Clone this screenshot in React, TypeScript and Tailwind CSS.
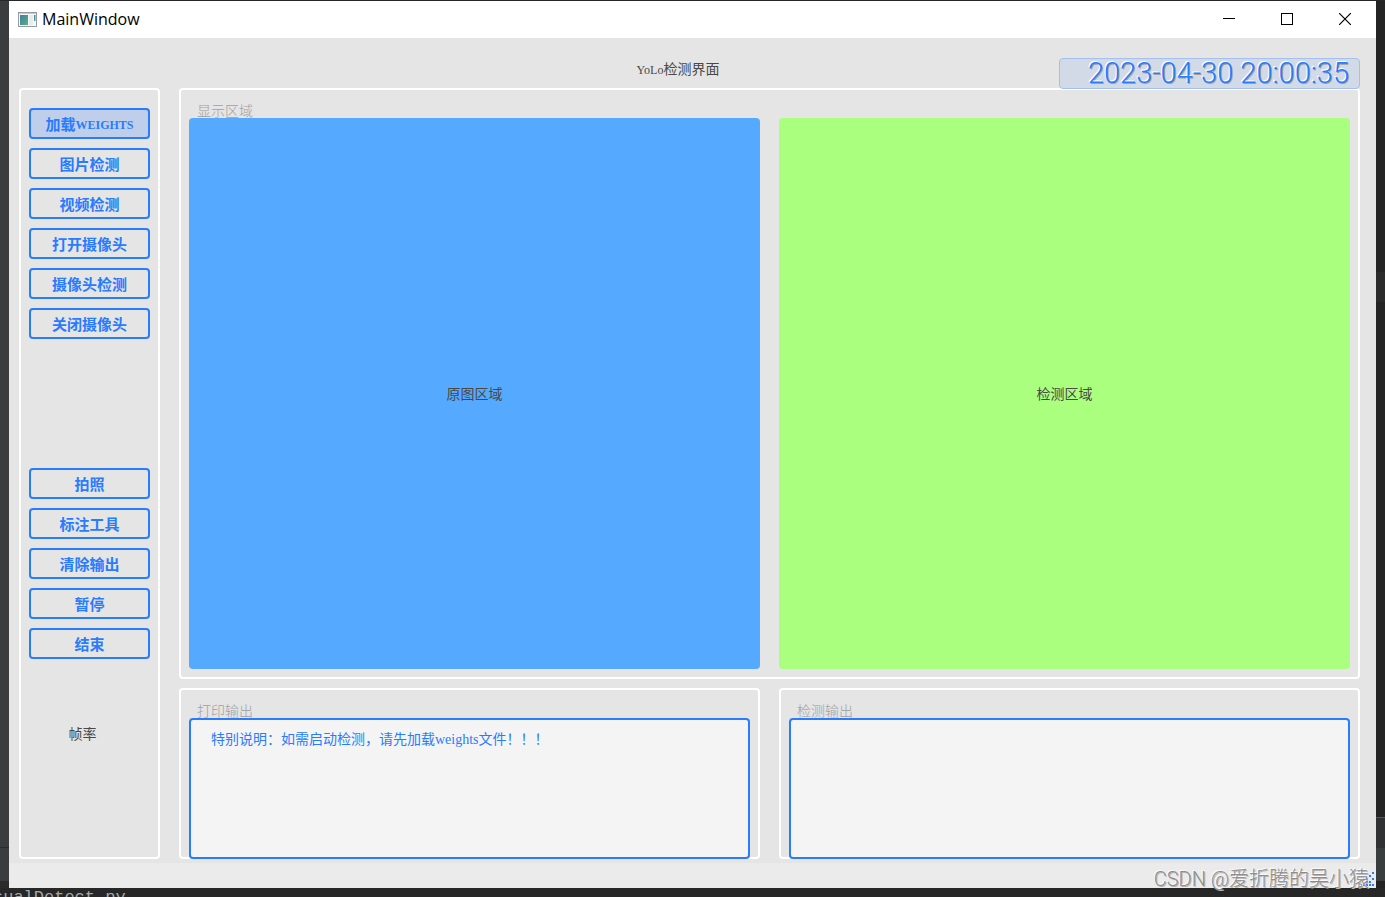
import React from 'react';

const loadActions = ['图片检测', '视频检测', '打开摄像头', '摄像头检测', '关闭摄像头'];
const toolActions = ['拍照', '标注工具', '清除输出', '暂停', '结束'];

function SideButton({ children, active = false }: { children: React.ReactNode; active?: boolean }) {
  return (
    <button
      type="button"
      className={
        'flex h-[31px] w-full items-center justify-center rounded-[4px] border-2 border-[#297bff] pt-0.5 text-[15px] leading-5 font-bold text-[#297bff] ' +
        (active ? 'bg-[#bfceea]' : 'bg-transparent')
      }
    >
      {children}
    </button>
  );
}

function Group({ title, className = '', children }: { title: string; className?: string; children: React.ReactNode }) {
  return (
    <section className={'flex flex-col rounded-[4px] border-2 border-white px-2 ' + className}>
      <h2 className="h-7 overflow-hidden px-2 pt-3 text-[14px] leading-5 font-light text-[#a0a0a0]">{title}</h2>
      {children}
    </section>
  );
}

function OutputBox({ label, text = '' }: { label: string; text?: string }) {
  return (
    <textarea
      aria-label={label}
      readOnly
      defaultValue={text}
      className="-mb-0.5 block w-full flex-1 resize-none rounded-[4px] border-2 border-[#297bff] bg-[#f4f4f4] px-5 py-2.5 text-[14px] leading-5 text-[#297bff] outline-none"
    />
  );
}

function TitleBar() {
  return (
    <header className="flex h-[37px] items-center bg-white">
      <svg className="ml-[9px]" width="19" height="16" viewBox="0 0 19 16" aria-hidden="true">
        <defs>
          <linearGradient id="pane" x1="0" y1="0" x2="1" y2="1">
            <stop offset="0" stopColor="#4779a5" />
            <stop offset="1" stopColor="#50b57e" />
          </linearGradient>
        </defs>
        <rect x="0.5" y="0.5" width="18" height="14" fill="#f7f8f8" stroke="#959ba1" />
        <path d="M1 1.5H18" stroke="#c5cace" />
        <rect x="2" y="3" width="8" height="10" fill="url(#pane)" />
        <rect x="11" y="3" width="4" height="10" fill="#e9ecec" />
        <rect x="16" y="3" width="1.5" height="6" fill="url(#pane)" />
      </svg>
      <h1 className="ml-[5px] flex-1 pb-0.5 font-['Open_Sans','Noto_Sans',sans-serif] text-[16px] leading-5 text-black">
        MainWindow
      </h1>
      <div className="flex h-full pr-0.5 pb-px">
        <button type="button" aria-label="Minimize" className="flex w-[58px] items-center justify-center">
          <svg width="12" height="12" viewBox="0 0 12 12" shapeRendering="crispEdges">
            <path d="M0 5.5H12" stroke="#000" />
          </svg>
        </button>
        <button type="button" aria-label="Maximize" className="flex w-[58px] items-center justify-center">
          <svg width="12" height="12" viewBox="0 0 12 12" shapeRendering="crispEdges">
            <rect x="0.5" y="0.5" width="11" height="11" fill="none" stroke="#000" />
          </svg>
        </button>
        <button type="button" aria-label="Close" className="flex w-[58px] items-center justify-center">
          <svg width="12" height="12" viewBox="0 0 12 12">
            <path d="M0 0L12 12M12 0L0 12" stroke="#000" strokeWidth="1.2" />
          </svg>
        </button>
      </div>
    </header>
  );
}

function SizeGrip() {
  const dots = [[12, 0], [9, 3], [12, 6], [3, 6], [6, 6], [9, 9], [6, 9], [0, 12], [3, 12], [6, 12], [12, 12], [9, 12]];
  return (
    <svg width="14" height="14" viewBox="0 0 14 14" shapeRendering="crispEdges" aria-hidden="true">
      {dots.map(([x, y]) => (
        <rect key={`${x}-${y}`} x={x} y={y} width="2" height="2" fill="#297bff" />
      ))}
    </svg>
  );
}

export default function App() {
  return (
    <div
      lang="zh-CN"
      className="relative flex min-h-screen flex-col overflow-hidden bg-[#272727] pt-px font-['Liberation_Serif','Noto_Sans_CJK_SC',serif] text-[#484848]"
    >
      <div className="flex flex-1">
        <div className="flex w-[9px] flex-col bg-[#3a3c3d]">
          <div className="flex-1" />
          <div className="h-[34px] border-t border-[#2b2b2b]" />
          <div className="h-[7px] bg-[#2b2b2b]" />
        </div>

        <div className="flex min-w-0 flex-1 flex-col bg-[#e5e5e5]">
          <TitleBar />

          <main className="flex flex-1 flex-col pr-4 pb-1 pl-2.5">
            <div className="grid h-[50px] grid-cols-[278px_1fr_301px] items-end">
              <p className="col-start-2 pb-2 text-center text-[14px] leading-5">
                <span className="text-[12px]">YoLo</span>检测界面
              </p>
              <output className="relative z-10 -mb-px flex h-[31px] items-center justify-end rounded-[4px] border border-[#a3c0f2] bg-[#d3dae7] pr-2.5 font-['Roboto',sans-serif] text-[29px] leading-[29px] font-light whitespace-nowrap text-[#297bff] [text-shadow:-1px_-1px_0_#fff,1px_1px_0_#a0a0a0]">
                2023-04-30 20:00:35
              </output>
            </div>

            <div className="flex flex-1 gap-[19px]">
              <nav className="flex w-[141px] shrink-0 flex-col rounded-[4px] border-2 border-white px-2 pt-[18px]">
                <div className="flex flex-col gap-[9px]">
                  <SideButton active>
                    加载<span className="text-[12px]">WEIGHTS</span>
                  </SideButton>
                  {loadActions.map((label) => (
                    <SideButton key={label}>{label}</SideButton>
                  ))}
                </div>
                <div className="mt-[129px] flex flex-col gap-[9px]">
                  {toolActions.map((label) => (
                    <SideButton key={label}>{label}</SideButton>
                  ))}
                </div>
                <p className="mt-[66px] pr-[14px] text-center text-[14px] leading-5">帧率</p>
              </nav>

              <div className="flex min-w-0 flex-1 flex-col gap-[9px]">
                <Group title="显示区域" className="flex-1 pb-2">
                  <div className="grid flex-1 grid-cols-2 gap-[19px]">
                    <div className="flex items-center justify-center rounded-[4px] bg-[#55aaff] pt-0.5 text-[14px] leading-5">
                      原图区域
                    </div>
                    <div className="flex items-center justify-center rounded-[4px] bg-[#aaff7f] pt-0.5 text-[14px] leading-5">
                      检测区域
                    </div>
                  </div>
                </Group>

                <div className="grid h-[171px] grid-cols-2 gap-[19px]">
                  <Group title="打印输出">
                    <OutputBox label="打印输出" text="特别说明：如需启动检测，请先加载weights文件！！！" />
                  </Group>
                  <Group title="检测输出">
                    <OutputBox label="检测输出" />
                  </Group>
                </div>
              </div>
            </div>
          </main>

          <footer className="flex h-[25px] items-end justify-end bg-[#ebebeb] pr-0.5 pb-0.5">
            <SizeGrip />
          </footer>
        </div>

        <div className="flex w-[9px] flex-col bg-[#242424]">
          <div className="h-[271px]" />
          <div className="h-[30px] bg-[#2b2b2b]" />
          <div className="flex-1" />
          <div className="h-[31px] border-t border-[#555555] bg-[#2f3132]" />
          <div className="h-[33px] bg-[#3a3d3e]" />
          <div className="h-[7px]" />
        </div>
      </div>

      <div className="flex h-[9px] justify-start overflow-hidden bg-[#272727]">
        <p className="-ml-[7px] font-['Liberation_Mono',monospace] text-[17px] leading-[20px] text-[#a3a7aa]">sualDetect.py</p>
      </div>

      <p className="pointer-events-none absolute right-4 bottom-1 z-20 font-['Roboto','Noto_Sans_CJK_SC',sans-serif] text-[20px] leading-7 font-light text-[#8c8c8c] [text-shadow:-1px_-1px_0_#fafafa,1px_1px_0_#b4b4b4]">
        CSDN @爱折腾的吴小猿
      </p>
    </div>
  );
}
